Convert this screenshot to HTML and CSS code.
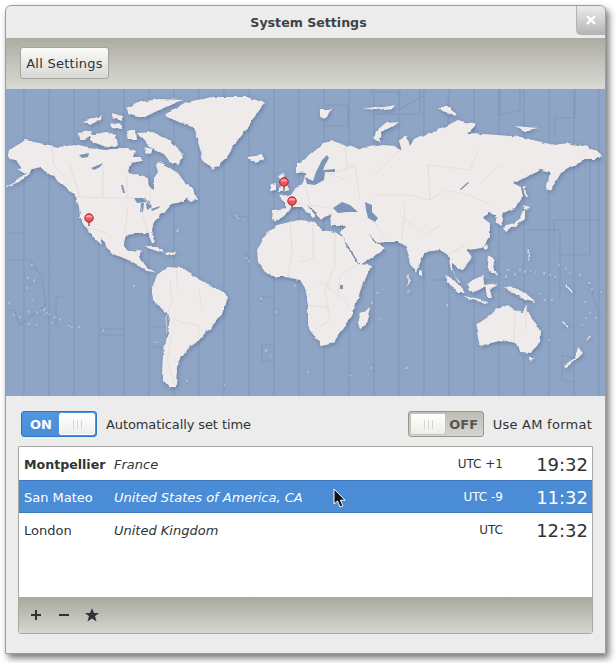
FILE: index.html
```html
<!DOCTYPE html>
<html lang="en">
<head>
<meta charset="utf-8">
<title>System Settings</title>
<link rel="stylesheet" href="styles.css">
</head>
<body>
<div class="window">
  <header class="titlebar">
    <span class="title">System Settings</span>
    <button class="close" aria-label="Close">
      <svg width="12" height="12" viewBox="0 0 12 12"><path class="close-x" d="M2 2L10 10M10 2L2 10"/></svg>
    </button>
  </header>
  <div class="toolbar"><button class="all-settings">All Settings</button></div>
  <div class="map">
    <svg class="map-svg" width="599" height="307" viewBox="6 89 599 307">
      <defs>
        <filter id="land-shadow" x="-5%" y="-5%" width="110%" height="110%" color-interpolation-filters="sRGB">
          <feTurbulence type="fractalNoise" baseFrequency="0.14" numOctaves="2" seed="4" result="noise"/>
          <feDisplacementMap in="SourceGraphic" in2="noise" scale="4" xChannelSelector="R" yChannelSelector="G" result="rough"/>
          <feGaussianBlur in="rough" stdDeviation="0.35" result="soft"/>
          <feDropShadow in="soft" dx="1" dy="1.5" stdDeviation="2" flood-color="#3f557f" flood-opacity="0.5"/>
        </filter>
      </defs>
      <path class="zones" d="M24 89V396M49 89V396M74 89V396M99 89V396M124 89V396M149 89V396M174 89V396M199 89V396M224 89V396M249 89V396M274 89V396M299 89V396M324 89V396M349 89V396M374 89V396M399 89V396M424 89V396M449 89V396M474 89V396M499 89V396M524 89V396M549 89V396M574 89V396M599 89V396
      M6 233H24V260H6M6 260H30L42 277L46 305L20 325L14 310H6M66 297H56V325M100 329H124M100 335H124M150 327H168V347H150M249 217H232V212M249 253H246V262M274 297H260V302M274 345H262V361H274M371 89V92H400V99M324 105H348V126H324M373 114H420V89M399 89V110L424 95M448 99V125L424 140V160M500 89V115L520 110V89M575 89V118H555V135M560 255H590V150M554 250V220H600M525 230H560V300M600 318L590 285M580 360L562 355V380L575 382M430 280H448M472 280H499V310"/>
      <g filter="url(#land-shadow)">
        <path class="land" d="
        M8 155L9 150L26 140L39 143L59 147L74 145L88 148L106 150L118 148L128 148L136 151L134 157L140 157L143 161L131 163L128 170L129 173L136 175L148 178L149 187L154 190L154 178L158 172L156 165L158 162L164 164L173 170L178 173L183 180L193 190L198 200L188 198L179 203L176 203L170 206L165 212L160 216L154 222L152 230L155 242L152 242L148 233L133 233L125 237L123 243L128 252L135 252L137 249L142 250L138 257L147 267L155 272L152 273L143 268L127 259L115 255L107 247L100 237L102 245L95 239L88 230L80 217L79 207L76 197L66 187L53 177L41 168L33 170L19 182L6 187L6 186L17 180L26 173L16 170L21 167L16 162L9 158Z
        M165 115L187 102L213 97L247 97L265 103L257 113L248 128L238 140L227 157L213 170L203 160L198 142L193 127L173 120Z
        M126 108L139 102L159 99L183 100L166 107L153 113L143 118L129 115Z
        M138 133L153 132L163 137L176 145L183 157L179 165L171 163L163 153L153 150L146 143Z
        M89 135L106 132L116 135L118 145L106 148L93 143Z
        M78 132L91 130L89 138L79 140Z
        M83 122L103 115L100 120L90 125Z
        M111 113L123 116L122 121L113 118Z
        M109 123L123 125L122 129L111 128Z
        M126 130L136 130L137 140L128 140Z
        M146 147L152 149L150 154L145 152Z
        M186 197L195 196L198 200L190 201Z
        M247 157L262 155L265 160L255 163Z
        M145 246L155 246L165 252L160 252L150 249Z
        M165 252L177 253L173 255L166 255Z
        M157 275L167 267L183 268L200 280L220 290L228 297L223 313L213 325L200 340L190 347L182 357L177 367L176 387L170 388L163 380L162 373L163 353L168 333L170 317L153 300L152 288Z
        M258 262L257 250L263 238L270 231L277 225L290 222L300 220L315 222L322 230L335 232L343 237L349 250L358 264L371 265L370 268L361 290L353 313L341 333L335 342L321 345L315 338L308 323L308 305L305 288L300 280L285 277L275 277L265 272Z
        M370 307L366 325L360 328L358 322L361 313Z
        M272 220L273 210L287 208L282 200L279 196L291 195L297 186L303 184L305 176L307 176L304 173L296 172L296 165L307 157L316 150L323 143L333 141L345 145L352 146L363 151L360 156L352 157L350 158L355 153L362 148L383 145L396 146L402 151L399 141L407 136L410 146L414 139L423 135L437 130L453 122L458 120L476 125L468 133L498 135L521 137L541 142L555 145L568 143L588 147L603 155L595 160L585 160L575 165L561 173L550 192L546 190L550 172L541 170L525 178L513 183L521 187L523 197L515 208L505 212L502 215L503 225L497 223L495 215L488 213L483 218L490 223L490 237L482 248L468 250L472 258L462 270L458 267L452 262L452 273L461 283L459 283L451 270L448 255L440 250L425 252L416 272L411 263L406 247L398 242L385 242L378 243L368 233L375 242L385 248L373 257L360 265L358 262L343 237L341 233L345 225L331 225L330 215L332 213L322 220L317 213L307 205L317 217L312 218L302 207L293 207L288 212L282 218L275 222Z
        M278 175L283 173L285 180L288 187L290 190L282 192L278 192L282 185Z
        M270 185L276 183L276 190L270 191Z
        M445 275L455 280L465 293L458 293L450 285Z
        M463 296L475 298L488 301L487 303L472 300Z
        M468 283L483 275L485 287L476 292L470 291Z
        M485 285L498 283L490 290L492 297L487 297Z
        M488 255L493 258L495 270L497 275L490 273L487 265Z
        M505 287L516 288L528 295L536 302L521 298L511 292Z
        M503 228L515 223L522 213L525 210L525 218L517 225L505 231Z
        M523 205L530 207L527 210L524 209Z
        M523 187L525 187L527 198L525 198Z
        M483 247L487 243L488 247L485 250Z
        M466 252L470 252L469 255L467 255Z
        M400 122L382 132L380 142L373 138L375 132L387 123Z
        M320 110L332 110L325 118L320 115Z
        M363 108L385 107L395 105L393 108L375 110Z
        M438 107L450 107L457 115L445 113Z
        M515 126L538 128L525 131Z
        M476 325L488 317L496 310L508 305L515 310L523 313L525 305L531 317L541 332L540 343L530 353L521 352L515 343L503 340L480 346L478 337Z
        M529 358L534 358L532 363Z
        M578 347L583 353L578 358L565 368L564 365L575 358Z
        M419 270L422 271L422 275L419 274Z"/>
        <path class="isles" d="M32 265h0M35 280h0M28 278h0M27 288h0M32 301h0M10 303h0M14 315h0M20 317h0M29 312h0M28 323h0M37 325h0M40 310h0M44 310h0M47 312h0M50 315h0M55 318h0M60 320h0M52 322h0M45 315h0M37 312h0M68 326h0M72 327h0M79 327h0M104 331h0M134 286h0M178 230h0M235 216h0M238 218h0M244 219h0M246 259h0M249 261h0M297 280h0M295 286h0M262 298h0M276 312h0M266 350h0M270 356h0M156 342h0M187 381h0M225 385h0M378 293h0M372 303h0M379 320h0M382 319h0M408 292h0M447 305h0M407 368h0M371 367h0M350 375h0M308 372h0
        M408 275v10M409 280v3M528 250l2 10M515 275h0M520 270h0M525 272h0M530 270h0M536 272h0M544 273h0M550 275h0M555 277h0M560 265h0M565 268h0M570 273h0M580 275h0M566 285l6 7M590 283h0M592 290h0M602 292h0M585 302h0M590 312h0M596 318h0M585 318h0M583 325h0M595 325h0M590 335h0M563 322l4 4M590 335l-3 6M550 340h0M540 295h0M545 300h0M552 300h0M506 277h0M508 270h0"/>
      </g>
      <path class="sea" d="M305 177L313 181L316 172L322 160L327 155L329 158L325 165L323 170L335 169L335 172L325 172L324 180L315 185L307 184Z
      M333 208L342 202L350 205L358 212L347 212L338 213Z
      M365 202L372 205L372 212L378 218L375 222L368 218L366 210Z
      M134 198L145 198L148 202L137 203Z M141 203L144 203L143 212L140 212Z M149 200L152 207L147 210L146 204Z M151 209L160 206L159 208L152 211Z
      M79 155L89 153L88 157L82 158Z M91 168L103 163L100 167L94 170Z M121 185L123 185L125 193L123 193Z
      M468 182L469 183L461 190L460 189Z M340 285L343 285L343 289L340 289Z"/>
      <path class="borders" d="M52 147L54 165L66 180M76 197L122 198L134 197M88 228L105 232L112 238M103 165L103 197M127 175L127 197M150 190L150 205L143 198M70 165L80 197M128 205L125 233M140 205L148 233
      M170 280L172 300L166 318L167 333M170 317L181 322L199 325L198 340L190 347M172 335L167 360L175 386M176 268L178 290M199 290L202 310
      M290 222L292 250L288 277M313 222L313 258L300 262M335 232L335 265L325 290L330 320L315 330M358 264L340 275L338 300M318 280L345 300L350 310M308 305L330 308
      M285 195L302 205M305 185L310 205L330 208M330 175L355 165L360 200M325 172L345 180M345 145L348 170M375 175L400 150M375 195L410 195L430 200L445 190L470 195L490 205M400 215L425 235L440 225M375 222L385 240M405 205L402 240M430 200L428 165L470 170L478 150M480 183L500 165M448 255L465 245M526 305L526 330M515 312L514 342"/>
      <g>
        <path class="pin-stem" d="M284 186V190M292 205V209M89 222V226"/>
        <circle class="pin-head" cx="284" cy="182" r="4.2"/>
        <circle class="pin-head" cx="292" cy="201" r="4.2"/>
        <circle class="pin-head" cx="89" cy="218" r="4.2"/>
        <path class="pin-shine" d="M280.5 181.5a3.5 2.6 0 0 1 7 0M288.5 200.5a3.5 2.6 0 0 1 7 0M85.5 217.5a3.5 2.6 0 0 1 7 0"/>
      </g>
    </svg>
  </div>
  <div class="content">
    <div class="controls">
      <div class="group">
        <div class="switch switch-on"><span class="switch-text">ON</span><span class="knob"></span></div>
        <span class="control-label label-auto">Automatically set time</span>
      </div>
      <div class="group">
        <div class="switch switch-off"><span class="knob"></span><span class="switch-text">OFF</span></div>
        <span class="control-label label-am">Use AM format</span>
      </div>
    </div>
    <div class="list">
      <div class="rows">
        <div class="row">
          <span class="city city-current">Montpellier</span><span class="country">France</span><span class="utc">UTC +1</span><span class="time">19:32</span>
        </div>
        <div class="row row-selected">
          <span class="city">San Mateo</span><span class="country">United States of America, CA</span><span class="utc">UTC -9</span><span class="time">11:32</span>
        </div>
        <div class="row">
          <span class="city">London</span><span class="country">United Kingdom</span><span class="utc">UTC</span><span class="time">12:32</span>
        </div>
      </div>
      <div class="list-toolbar">
        <span class="tool"><svg width="14" height="14" viewBox="0 0 14 14"><path class="tool-stroke" d="M2 7H12M7 2V12"/></svg></span>
        <span class="tool"><svg width="14" height="14" viewBox="0 0 14 14"><path class="tool-stroke" d="M2 7H12"/></svg></span>
        <span class="tool"><svg width="16" height="16" viewBox="0 0 16 16"><path class="tool-fill" d="M8 1.2L10 6H15L11 9.2L12.6 14.5L8 11.5L3.4 14.5L5 9.2L1 6H6Z"/></svg></span>
      </div>
    </div>
  </div>
  <svg class="cursor" width="14" height="21" viewBox="0 0 14 21"><path class="cursor-arrow" d="M1 1V16L4.5 13L7 19L9.8 17.8L7.4 12.2H12Z"/></svg>
</div>
</body>
</html>
```

FILE: styles.css
```css
* { box-sizing: border-box; }

html, body {
  margin: 0;
  padding: 0;
  background: #fff;
}

body {
  height: 663px;
  overflow: hidden;
  padding: 5px 0 0 5px;
  font-family: "DejaVu Sans", sans-serif;
  font-size: 13px;
  color: #2e3436;
}

.window {
  position: relative;
  width: 601px;
  height: 649px;
  display: flex;
  flex-direction: column;
  background: #ececec;
  border: 1px solid #9c9c9c;
  border-radius: 6px 6px 0 0;
  box-shadow: 3px 4px 7px rgba(0, 0, 0, 0.55);
}

.titlebar {
  position: relative;
  height: 32px;
  flex: none;
  display: flex;
  align-items: center;
  justify-content: center;
  padding-left: 6px;
  border-radius: 6px 6px 0 0;
  background: #ececec;
}

.title {
  font-weight: bold;
  font-size: 12.6px;
  color: #3d4244;
}

.close {
  position: absolute;
  top: 0;
  right: 0;
  width: 29px;
  height: 29px;
  padding: 0;
  display: flex;
  align-items: center;
  justify-content: center;
  border: solid #b4b5b2;
  border-width: 0 0 1px 1px;
  border-radius: 0 6px 0 5px;
  background: linear-gradient(#ececec, #b3b5b3);
}

.close-x {
  fill: none;
  stroke: #fff;
  stroke-width: 2.4;
}

.toolbar {
  height: 51px;
  flex: none;
  padding: 9px 0 0 14px;
  background: linear-gradient(#adaca2, #d9d9d5);
  border-bottom: 1px solid #d8d8d4;
}

.all-settings {
  width: 89px;
  height: 32px;
  padding: 1px 0 0;
  font: 13px "DejaVu Sans", sans-serif;
  letter-spacing: 0.25px;
  color: #2e3436;
  border: 1px solid #a5a59e;
  border-radius: 3px;
  background: linear-gradient(#fbfbfa, #d8d8d5);
}

.map {
  height: 307px;
  flex: none;
  background: #8fa5c6;
}

.map-svg { display: block; }

.zones {
  fill: none;
  stroke: #8299bc;
  stroke-width: 1.2;
}

.land { fill: #eeebea; }

.isles {
  fill: none;
  stroke: #eeebea;
  stroke-width: 1.3;
  stroke-linecap: round;
}

.sea { fill: #7d94b9; }

.borders {
  fill: none;
  stroke: #dfdbd8;
  stroke-width: 0.8;
}

.pin-stem {
  fill: none;
  stroke: #777;
  stroke-width: 1.6;
}

.pin-head {
  fill: #ea5560;
  stroke: #b5161f;
  stroke-width: 1;
}

.pin-shine {
  fill: #f7a3a6;
  stroke: none;
}

.content {
  flex: 1;
  display: flex;
  flex-direction: column;
  padding: 15px 12px 19px;
  gap: 9px;
}

.controls {
  display: flex;
  justify-content: space-between;
  padding: 0 1px 0 3px;
}

.group {
  display: flex;
  align-items: center;
  gap: 9px;
}

.control-label { white-space: nowrap; }

.label-auto { letter-spacing: -0.1px; }

.label-am { letter-spacing: 0.25px; }

.switch {
  width: 76px;
  height: 26px;
  padding: 1px;
  display: flex;
  align-items: stretch;
  border-radius: 3px;
  font-weight: bold;
  font-size: 13px;
}

.switch-on {
  border: 1px solid #2f78c5;
  background: linear-gradient(#5096e0, #4a8cd6);
  color: #fff;
}

.switch-off {
  border: 1px solid #96968d;
  background: linear-gradient(#bdbdb5, #d6d6d1);
  color: #555753;
}

.switch-text {
  flex: 1;
  display: flex;
  align-items: center;
  justify-content: center;
}

.knob {
  position: relative;
  width: 36px;
  border-radius: 2px;
  background: linear-gradient(#ffffff, #eeeeec);
  border: 1px solid #fff;
}

.switch-off .knob { border-color: #c4c4b8; }

.knob::after {
  content: "";
  position: absolute;
  left: 13px;
  top: 6px;
  width: 9px;
  height: 9px;
  background: repeating-linear-gradient(90deg, #d5d5d2 0 1px, transparent 1px 4px);
}

.list {
  flex: 1;
  display: flex;
  flex-direction: column;
  border: 1px solid #a8a8a3;
  border-radius: 0 0 3px 3px;
  background: #fff;
}

.rows { flex: 1; }

.row {
  height: 33px;
  display: grid;
  grid-template-columns: 90px 1fr auto 85px;
  align-items: center;
  padding: 1px 4px 0 5px;
  white-space: nowrap;
}

.row-selected {
  background: #4a8cd6;
  color: #fff;
  border-top: 1px solid #3f78bb;
  border-bottom: 1px solid #3f78bb;
}

.city-current {
  font-weight: bold;
  font-size: 12.6px;
}

.country { font-style: italic; }

.utc { font-size: 12px; }

.time {
  font-size: 18px;
  text-align: right;
}

.list-toolbar {
  height: 36px;
  flex: none;
  display: flex;
  padding-left: 3px;
  background: linear-gradient(#a9a89c, #d6d6d2);
  border-radius: 0 0 3px 3px;
}

.tool {
  width: 28px;
  display: flex;
  align-items: center;
  justify-content: center;
}

.tool-stroke {
  fill: none;
  stroke: #2e3436;
  stroke-width: 2;
}

.tool-fill { fill: #2e3436; }

.cursor {
  position: absolute;
  left: 327px;
  top: 482px;
}

.cursor-arrow {
  fill: #111;
  stroke: #fff;
  stroke-width: 1;
}
```
